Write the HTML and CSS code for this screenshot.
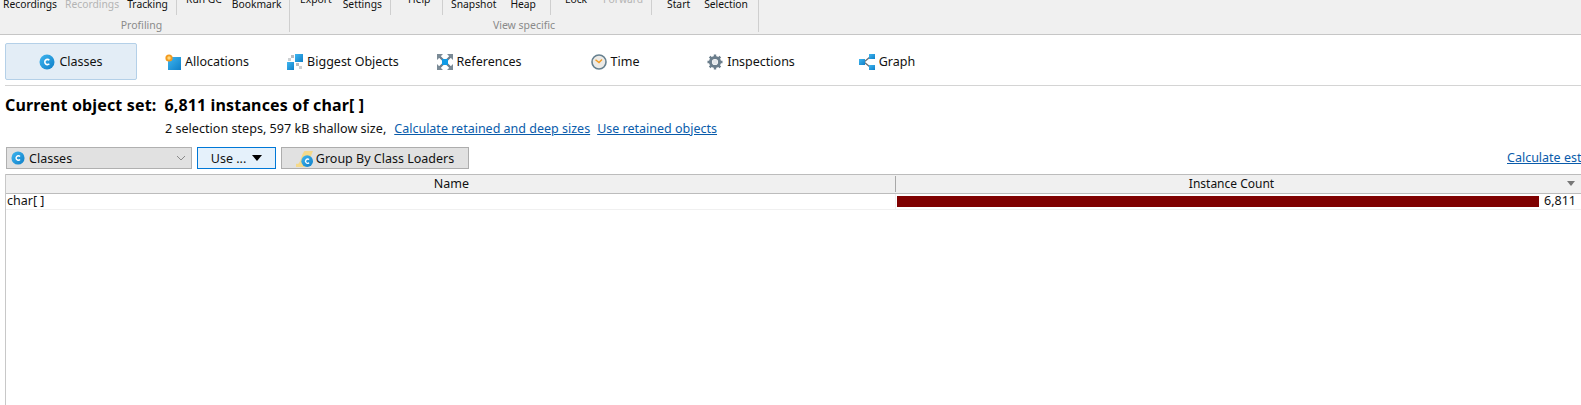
FILE: index.html
```html
<!DOCTYPE html>
<html lang="en">
<head>
<meta charset="utf-8">
<title>Classes</title>
<link rel="stylesheet" href="styles.css">
</head>
<body>
<svg class="defs" width="0" height="0" aria-hidden="true">
  <defs>
    <linearGradient id="blue" x1="0" y1="0" x2="1" y2="1"><stop offset="0" stop-color="#3fb6f0"/><stop offset="1" stop-color="#0f7fc8"/></linearGradient>
    <symbol id="cls" viewBox="0 0 16 16">
      <circle cx="8" cy="8" r="7.500" fill="url(#blue)"/>
      <path d="M10.300 6.200A2.600 2.600 0 1 0 10.300 9.800" fill="none" stroke="#fff" stroke-width="1.600"/>
    </symbol>
  </defs>
</svg>

<header class="ribbon">
  <section class="section sec-profiling">
    <div class="tools">
      <div class="group g-a">
        <span class="tool">Recordings</span>
        <span class="tool off">Recordings</span>
        <span class="tool">Tracking</span>
      </div>
      <div class="group g-b">
        <span class="tool up">Run GC</span>
        <span class="tool">Bookmark</span>
      </div>
    </div>
    <div class="section-label label-profiling">Profiling</div>
  </section>
  <section class="section">
    <div class="tools">
      <div class="group g-c">
        <span class="tool up">Export</span>
        <span class="tool">Settings</span>
      </div>
      <div class="group g-d">
        <span class="tool up">Help</span>
      </div>
      <div class="group g-e">
        <span class="tool">Snapshot</span>
        <span class="tool">Heap</span>
      </div>
      <div class="group g-f">
        <span class="tool up">Lock</span>
        <span class="tool up off">Forward</span>
      </div>
      <div class="group g-g">
        <span class="tool">Start</span>
        <span class="tool">Selection</span>
      </div>
    </div>
    <div class="section-label">View specific</div>
  </section>
</header>

<nav class="tabs">
  <div class="tab active">
    <svg class="ico" viewBox="0 0 16 16"><use href="#cls"/></svg><span>Classes</span>
  </div>
  <div class="tab">
    <svg class="ico" viewBox="0 0 16 16"><rect x="3" y="3" width="13" height="13" fill="url(#blue)"/><circle cx="4" cy="4" r="3.600" fill="#f39a1e"/><circle cx="4" cy="4" r="1.700" fill="#ffd77a"/></svg><span>Allocations</span>
  </div>
  <div class="tab">
    <svg class="ico" viewBox="0 0 16 16"><rect x="8" y="0" width="8" height="8" fill="url(#blue)"/><rect x="0" y="8" width="7" height="8" fill="url(#blue)"/><rect x="4" y="1" width="3" height="3" fill="#b8bcc0"/><rect x="1" y="4" width="3" height="3" fill="#ccd0d3"/><rect x="9" y="9" width="3" height="3" fill="#b8bcc0"/><rect x="12" y="12" width="3" height="3" fill="#ccd0d3"/></svg><span>Biggest Objects</span>
  </div>
  <div class="tab">
    <svg class="ico" viewBox="0 0 16 16"><path d="M1 1l5 5M15 1l-5 5M1 15l5-5M15 15l-5-5" stroke="#6d7f8c" stroke-width="2.400"/><path d="M0 0h6L0 6zM16 0h-6l6 6zM0 16h6l-6-6zM16 16h-6l6-6z" fill="#7a8a96"/><rect x="5" y="5" width="6" height="6" fill="#119be6"/></svg><span>References</span>
  </div>
  <div class="tab">
    <svg class="ico" viewBox="0 0 16 16"><circle cx="8" cy="8" r="7" fill="#eceae6" stroke="#66808f" stroke-width="1.600"/><path d="M4.500 5.800L8 8.600L11 5.600" fill="none" stroke="#f39a1e" stroke-width="1.400"/></svg><span>Time</span>
  </div>
  <div class="tab">
    <svg class="ico" viewBox="0 0 16 16"><circle cx="8" cy="8" r="4.600" fill="none" stroke="#6b7e8c" stroke-width="3"/><path d="M8 .5v15M.5 8h15M2.700 2.700l10.600 10.600M13.300 2.700L2.700 13.300" stroke="#6b7e8c" stroke-width="2.400" stroke-dasharray="3 9"/><circle cx="8" cy="8" r="2.600" fill="#e4e7ea"/></svg><span>Inspections</span>
  </div>
  <div class="tab">
    <svg class="ico" viewBox="0 0 16 16"><path d="M5 8L11 3M5 8L11 13" stroke="#66727c" stroke-width="1.400" fill="none"/><rect x="0" y="5" width="6" height="6" fill="url(#blue)"/><rect x="10" y="0" width="6" height="5" fill="url(#blue)"/><rect x="10" y="11" width="6" height="5" fill="url(#blue)"/></svg><span>Graph</span>
  </div>
</nav>

<div class="summary">
  <div class="summary-title"><span class="summary-key">Current object set:</span><span>6,811 instances of char[ ]</span></div>
  <div class="summary-sub"><span>2 selection steps, 597 kB shallow size,</span><a class="link" href="#">Calculate retained and deep sizes</a><a class="link" href="#">Use retained objects</a></div>
</div>

<div class="controls">
  <div class="combo">
    <svg class="ico-sm" viewBox="0 0 16 16"><use href="#cls"/></svg>
    <span class="combo-text">Classes</span>
    <svg class="chev" viewBox="0 0 10 6"><path d="M1 1l4 4 4-4" fill="none" stroke="#8a8a8a" stroke-width="1"/></svg>
  </div>
  <div class="btn btn-use"><span>Use ...</span><span class="caret"></span></div>
  <div class="btn btn-group">
    <svg class="ico-group" viewBox="0 0 16 16"><path d="M2 13C5 11 5 4 8 1h8c-2 4-3 10-6 13z" fill="#f5d98a"/><path d="M0 13h9v3H0z" fill="#f5d98a"/><circle cx="10.500" cy="10.500" r="5.500" fill="url(#blue)"/><path d="M12.300 9A2 2 0 1 0 12.300 12" fill="none" stroke="#fff" stroke-width="1.300"/></svg>
    <span>Group By Class Loaders</span>
  </div>
  <a class="link link-est" href="#">Calculate estimated retained sizes</a>
</div>

<div class="table">
  <div class="thead">
    <div class="th th-name">Name</div>
    <div class="th th-count">Instance Count<span class="sort"></span></div>
  </div>
  <div class="row">
    <div class="cell-name">char[ ]</div>
    <div class="cell-count"><div class="bar"></div><span class="val">6,811</span></div>
  </div>
</div>
</body>
</html>
```
FILE: styles.css
```css
* { box-sizing: border-box; }
html, body { margin: 0; height: 100%; overflow: hidden; background: #fff; }
body { font-family: "Noto Sans", "Open Sans", sans-serif; font-size: 12.500px; color: #111; width: 1581px; height: 405px; }
.defs { position: absolute; }

.ribbon { display: flex; height: 35px; background: #f0f0f0; border-bottom: 1px solid #c6c6c6; overflow: hidden; }
.section { display: flex; flex-direction: column; border-right: 1px solid #cfcfcf; height: 32px; }
.tools { display: flex; height: 16px; margin-top: -4px; flex: none; }
.group { display: flex; align-items: flex-end; height: 19px; border-right: 1px solid #cfcfcf; padding-bottom: 3px; flex: none; }
.group:last-child { border-right: 0; }
.tool { line-height: 16px; white-space: nowrap; font-size: 10.300px; }
.tool.up { margin-bottom: 5px; }
.tool.off { color: #b4b4b4; }
.section-label { font-size: 10.500px; line-height: 14px; margin-top: 6px; text-align: center; color: #8a8a8a; }
.label-profiling { padding-right: 6px; }

.g-a { width: 177px; padding-left: 3px; gap: 8px; }
.g-b { width: 112px; padding-left: 9px; gap: 10px; }
.g-c { width: 101px; padding-left: 10px; gap: 11px; }
.g-d { width: 52px; padding-left: 17px; }
.g-e { width: 108px; padding-left: 8px; gap: 14px; }
.g-f { width: 101px; padding-left: 14px; gap: 16px; }
.g-g { width: 106px; padding-left: 15px; gap: 14px; }

.tabs { display: flex; gap: 4px; height: 51px; margin-left: 5px; padding-top: 8px; border-bottom: 1px solid #d4d4d4; }
.tab { width: 132px; height: 37px; display: flex; align-items: center; justify-content: center; gap: 4px; border: 1px solid transparent; border-radius: 2px; }
.tab.active { background: #e3edf6; border-color: #b4d0e8; }
.ico { width: 16px; height: 16px; flex: none; }

.summary { padding-left: 5px; }
.summary-title { display: flex; gap: 8px; margin-top: 9px; font-size: 16px; font-weight: 700; line-height: 20px; letter-spacing: .15px; color: #000; }
.summary-sub { display: flex; margin-top: 6px; margin-left: 160px; line-height: 16px; font-size: 12.600px; }
.link { color: #0a5cab; text-decoration: underline; }
.summary-sub .link { margin-left: 8px; font-size: 12.500px; }
.summary-sub .link + .link { margin-left: 7px; }

.controls { display: flex; align-items: flex-start; margin-top: 10px; padding-left: 6px; height: 27px; }
.combo { width: 186px; height: 22px; display: flex; align-items: center; background: #e1e1e1; border: 1px solid #b0b0b0; padding: 0 4px; gap: 4px; }
.ico-sm { width: 14px; height: 14px; flex: none; }
.combo-text { flex: 1; }
.chev { width: 10px; height: 6px; margin-right: 1px; }
.btn { height: 22px; display: flex; align-items: center; justify-content: center; }
.btn-use { width: 79px; margin-left: 5px; gap: 6px; background: #e5f1fb; border: 1px solid #0078d7; }
.caret { width: 0; height: 0; border-left: 5px solid transparent; border-right: 5px solid transparent; border-top: 6px solid #000; }
.btn-group { width: 188px; margin-left: 5px; gap: 3px; background: #e1e1e1; border: 1px solid #adadad; }
.ico-group { width: 17px; height: 17px; flex: none; }
.link-est { margin-left: auto; width: 74px; overflow: hidden; white-space: nowrap; line-height: 22px; }

.table { margin-left: 5px; height: 240px; border-left: 1px solid #c8c8c8; }
.thead { display: flex; height: 20px; background: #f0f0f0; border-top: 1px solid #bcbcbc; border-bottom: 1px solid #bcbcbc; }
.th { display: flex; align-items: center; justify-content: center; line-height: 16px; }
.th-name { width: 890px; border-right: 1px solid #a8a8a8; margin: 1px 0; padding-left: 2px; }
.th-count { flex: 1; position: relative; font-size: 12px; padding-right: 14px; }
.sort { position: absolute; right: 6px; top: 6px; width: 0; height: 0; border-left: 4px solid transparent; border-right: 4px solid transparent; border-top: 5px solid #777; }
.row { display: flex; height: 16px; border-bottom: 1px solid #f0f0f0; }
.cell-name { width: 890px; padding-left: 1px; line-height: 14px; border-right: 1px solid #f0f0f0; }
.cell-count { flex: 1; display: flex; align-items: flex-start; padding-left: 1px; }
.bar { width: 642px; height: 11px; margin-top: 2px; background: #7f0000; }
.val { margin-left: 5px; line-height: 14px; }
```
